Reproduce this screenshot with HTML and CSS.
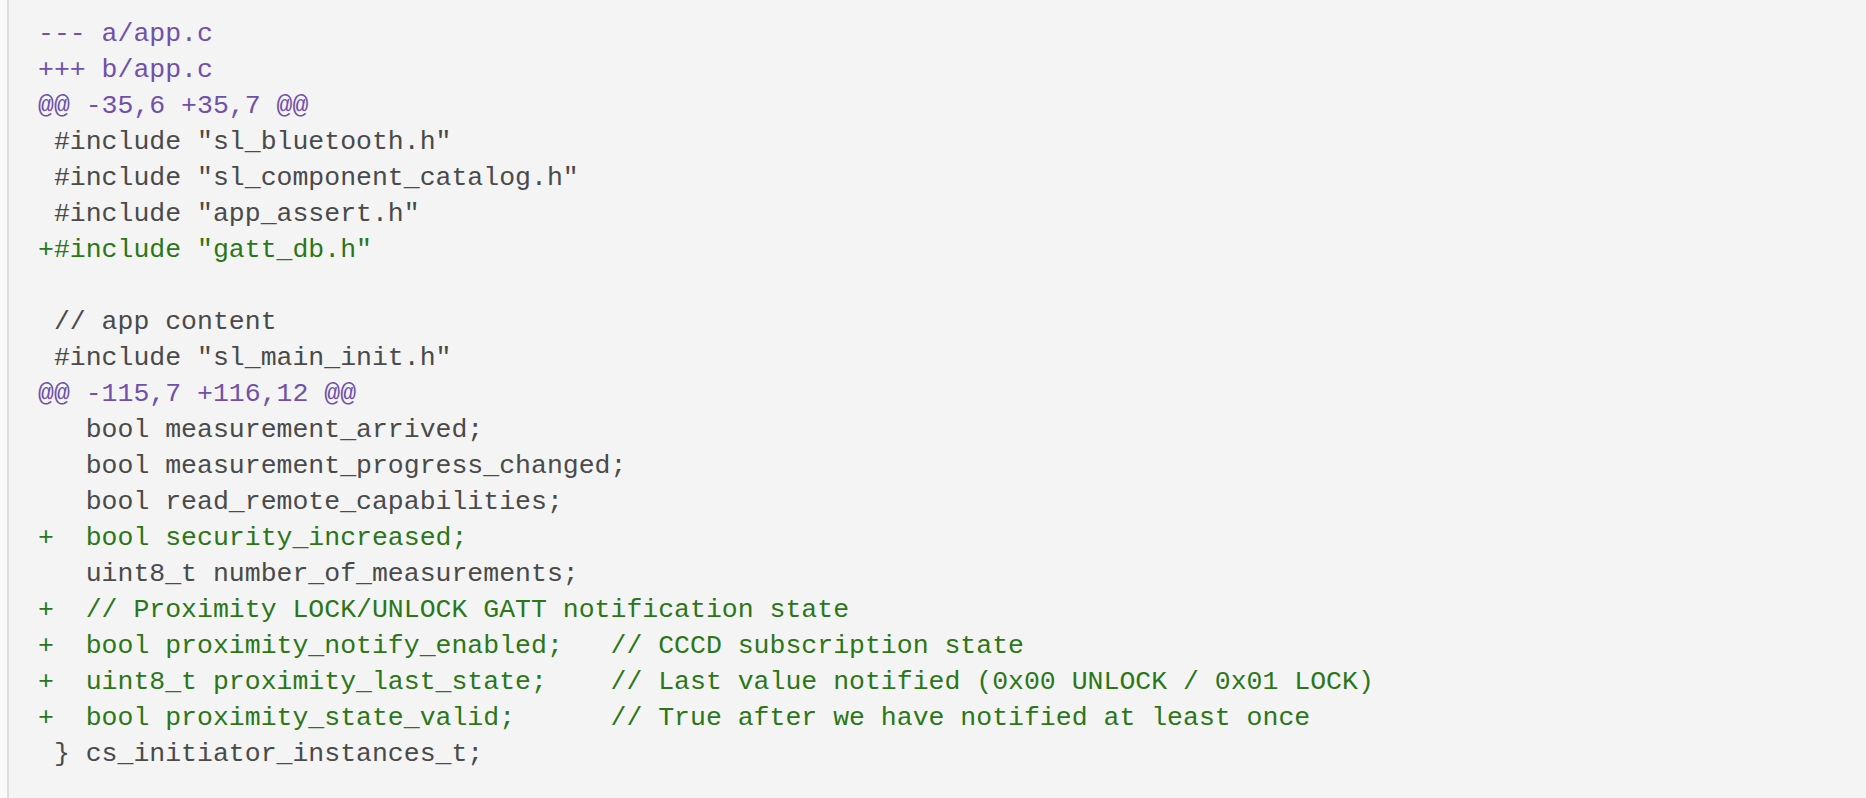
FILE: index.html
```html
<!DOCTYPE html>
<html>
<head>
<meta charset="utf-8">
<link rel="stylesheet" href="styles.css">
</head>
<body>
<div class="page">
<pre class="diff"><code><span class="meta">--- a/app.c</span>
<span class="meta">+++ b/app.c</span>
<span class="meta">@@ -35,6 +35,7 @@</span>
<span class="ctx"> #include "sl_bluetooth.h"</span>
<span class="ctx"> #include "sl_component_catalog.h"</span>
<span class="ctx"> #include "app_assert.h"</span>
<span class="add">+#include "gatt_db.h"</span>

<span class="ctx"> // app content</span>
<span class="ctx"> #include "sl_main_init.h"</span>
<span class="meta">@@ -115,7 +116,12 @@</span>
<span class="ctx">   bool measurement_arrived;</span>
<span class="ctx">   bool measurement_progress_changed;</span>
<span class="ctx">   bool read_remote_capabilities;</span>
<span class="add">+  bool security_increased;</span>
<span class="ctx">   uint8_t number_of_measurements;</span>
<span class="add">+  // Proximity LOCK/UNLOCK GATT notification state</span>
<span class="add">+  bool proximity_notify_enabled;   // CCCD subscription state</span>
<span class="add">+  uint8_t proximity_last_state;    // Last value notified (0x00 UNLOCK / 0x01 LOCK)</span>
<span class="add">+  bool proximity_state_valid;      // True after we have notified at least once</span>
<span class="ctx"> } cs_initiator_instances_t;</span>
</code></pre>
</div>
</body>
</html>
```

FILE: styles.css
```css
html, body {
  margin: 0;
  padding: 0;
  background: #fafafa;
}

.page {
  padding-left: 7px;
  height: 798px;
  box-sizing: border-box;
}

.diff {
  margin: 0;
  height: 100%;
  box-sizing: border-box;
  background: #f4f4f4;
  border-left: 2px solid #dedede;
  padding: 16px 0 0 29px;
  font-family: "Liberation Mono", "Courier New", monospace;
  font-size: 26.5px;
  line-height: 36px;
  color: #4a4a4a;
  white-space: pre;
  overflow: hidden;
}

.diff code {
  font-family: inherit;
}

.meta {
  color: #7050aa;
}

.ctx {
  color: #4a4a4a;
}

.add {
  color: #2b7718;
}
```
